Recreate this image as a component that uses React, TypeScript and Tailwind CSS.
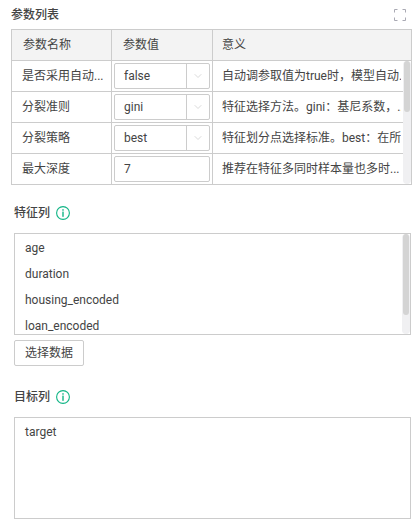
import { ChevronDown } from 'lucide-react'

const params = [
  { name: '是否采用自动...', value: 'false', desc: '自动调参取值为true时，模型自动...', select: true },
  { name: '分裂准则', value: 'gini', desc: '特征选择方法。gini：基尼系数，...', select: true },
  { name: '分裂策略', value: 'best', desc: '特征划分点选择标准。best：在所...', select: true },
  { name: '最大深度', value: '7', desc: '推荐在特征多同时样本量也多时...', select: false },
]

const features = ['age', 'duration', 'housing_encoded', 'loan_encoded']

function InfoIcon() {
  return (
    <svg width="14" height="14" viewBox="0 0 14 14" fill="none" className="ml-[6px]">
      <circle cx="7" cy="7" r="6.4" stroke="#10b585" strokeWidth="1.1" />
      <rect x="6.3" y="3.2" width="1.4" height="1.5" fill="#10b585" />
      <rect x="6.3" y="5.6" width="1.4" height="5.2" fill="#10b585" />
    </svg>
  )
}

function Scrollbar({ thumb }: { thumb: string }) {
  return (
    <div className="absolute top-0 right-0 bottom-0 w-[8px] rounded-sm bg-[#f0f0f2]">
      <div className={`w-[6px] mx-auto rounded-sm bg-[#d4d4d4] ${thumb}`} />
    </div>
  )
}

export default function App() {
  return (
    <div className="w-[420px] h-[523px] bg-white text-[12px] text-[#444444] overflow-hidden font-['Roboto','Noto_Sans_CJK_SC',sans-serif]">
      {/* 参数列表 */}
      <div className="flex items-center justify-between h-[29px] pl-[11px] pr-[14px]">
        <span className="font-medium">参数列表</span>
        <svg width="12" height="12" viewBox="0 0 12 12" fill="none" stroke="#a9a9b3" strokeWidth="1">
          <path d="M0.5 3.5V0.5H3.5M8.5 0.5H11.5V3.5M11.5 8.5V11.5H8.5M3.5 11.5H0.5V8.5" />
        </svg>
      </div>

      <div className="relative w-[401px] ml-[11px] border border-[#cccccc]">
        <div className="flex h-[31px] items-center bg-[#f3f3f3] border-b border-[#cccccc]">
          <div className="w-[100px] h-full flex items-center pl-[11px] border-r border-[#cccccc]">参数名称</div>
          <div className="w-[101px] h-full flex items-center pl-[11px] border-r border-[#cccccc]">参数值</div>
          <div className="flex-1 pl-[9px]">意义</div>
        </div>
        <div className="relative">
          {params.map((row, i) => (
            <div key={row.name} className={i < 3 ? 'flex h-[31px] items-center border-b border-[#cccccc]' : 'flex h-[30px] items-center'}>
              <div className="w-[100px] h-full flex items-center pl-[10px] border-r border-[#cccccc] whitespace-nowrap">{row.name}</div>
              <div className="w-[101px] h-full flex items-center pl-[2px] border-r border-[#cccccc]">
                <div className="flex w-[96px] h-[26px] items-center border border-[#cccccc] rounded-[2px]">
                  <span className="flex-1 pl-[9px]">{row.value}</span>
                  {row.select && (
                    <span className="w-[23px] h-full flex items-center justify-center border-l border-[#cccccc]">
                      <ChevronDown size={12} strokeWidth={1.25} color="#c4c4c4" />
                    </span>
                  )}
                </div>
              </div>
              <div className="w-[188px] pl-[9px] whitespace-nowrap overflow-hidden">{row.desc}</div>
            </div>
          ))}
          <Scrollbar thumb="h-[51px]" />
        </div>
      </div>

      {/* 特征列 */}
      <div className="flex items-center h-[20px] mt-[18px] pl-[14px]">
        <span className="font-medium">特征列</span>
        <InfoIcon />
      </div>
      <div className="relative w-[397px] h-[102px] ml-[14px] mt-[10px] border border-[#cccccc] overflow-hidden">
        <div className="flex flex-col pl-[10px] pt-[1px]">
          {features.map((f) => (
            <div key={f} className="h-[26px] flex items-center shrink-0">{f}</div>
          ))}
        </div>
        <Scrollbar thumb="h-[81px]" />
      </div>
      <button className="block w-[70px] h-[26px] ml-[14px] mt-[5px] border border-[#cccccc] rounded-[2px] bg-white text-center">
        选择数据
      </button>

      {/* 目标列 */}
      <div className="flex items-center h-[20px] mt-[21px] pl-[14px]">
        <span className="font-medium">目标列</span>
        <InfoIcon />
      </div>
      <div className="w-[397px] h-[102px] ml-[14px] mt-[10px] border border-[#cccccc] pl-[10px] pt-[2px]">
        <div className="h-[24px] flex items-center">target</div>
      </div>
    </div>
  )
}
